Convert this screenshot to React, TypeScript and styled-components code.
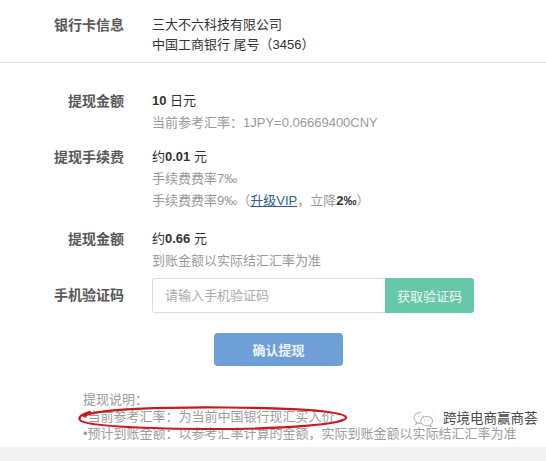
import React from "react";
import styled, { createGlobalStyle } from "styled-components";

const Global = createGlobalStyle`
  html, body { margin: 0; padding: 0; background: #ffffff; }
  body {
    font-family: "Liberation Sans", "Noto Sans CJK SC", sans-serif;
    font-size: 13px;
    color: #333;
  }
  * { box-sizing: border-box; }
`;

const Page = styled.div`
  position: relative;
  width: 546px;
  height: 461px;
  overflow: hidden;
  background: #fff;
`;

const BankSection = styled.section`
  padding: 15px 0 7px;
  border-bottom: 1px solid #e3e3e3;
`;

const Form = styled.section`
  padding-top: 27px;
`;

const Row = styled.div<{ $top?: number; $lh?: number; $center?: boolean }>`
  display: grid;
  grid-template-columns: 124px 1fr;
  column-gap: 28px;
  margin-top: ${(p) => p.$top ?? 0}px;
  line-height: ${(p) => p.$lh ?? 22}px;
  align-items: ${(p) => (p.$center ? "center" : "start")};
`;

const Label = styled.div`
  text-align: right;
  font-size: 14px;
  font-weight: 700;
  color: #585858;
  white-space: nowrap;
`;

const Values = styled.div`
  display: flex;
  flex-direction: column;
`;

const Main = styled.div`
  font-size: 13px;
  color: #333;
  white-space: nowrap;
`;

const Sub = styled.div`
  font-size: 13px;
  color: #999;
  white-space: nowrap;
`;

const Num = styled.b`
  font-weight: 700;
  color: #333;
`;

const VipLink = styled.a`
  color: #2d5c9f;
  text-decoration: underline;
`;

const CodeGroup = styled.div`
  display: flex;
  width: 322px;
  height: 35px;
`;

const CodeInput = styled.input`
  flex: 1;
  min-width: 0;
  height: 35px;
  border: 1px solid #dcdcdc;
  border-right: none;
  border-radius: 3px 0 0 3px;
  padding: 0 12px;
  font-family: inherit;
  font-size: 13px;
  color: #333;
  outline: none;
  &::placeholder { color: #aaa; }
`;

const CodeButton = styled.button`
  width: 89px;
  height: 35px;
  border: none;
  border-radius: 0 3px 3px 0;
  background: #66c8a6;
  color: #eefaf5;
  font-family: inherit;
  font-size: 13px;
  padding: 0;
`;

const ActionBar = styled.div`
  padding-left: 214px;
  margin-top: 20px;
`;

const ConfirmButton = styled.button`
  width: 129px;
  height: 33px;
  border: none;
  border-radius: 4px;
  background: #6ea0d7;
  color: #eef4fb;
  font-family: inherit;
  font-size: 13px;
  font-weight: 700;
  padding: 0;
`;

const Notes = styled.div`
  margin-top: 25px;
  padding-left: 83px;
  font-size: 13px;
  line-height: 17px;
  color: #9c9c9c;
  height: 56px;
`;

const NoteLine = styled.div`
  white-space: nowrap;
`;

const Band = styled.div`
  height: 20px;
  background: #f2f2f2;
`;

const Ellipse = styled.svg`
  position: absolute;
  left: 76px;
  top: 404px;
  width: 274px;
  height: 28px;
  pointer-events: none;
`;

const Watermark = styled.div`
  position: absolute;
  left: 413px;
  top: 410px;
  display: flex;
  align-items: center;
  gap: 9px;
  font-size: 13.5px;
  line-height: 18px;
  color: #4a4a4a;
  text-shadow: 0 0 2px #fff, 0 0 2px #fff;
  white-space: nowrap;
`;

const WeChatIcon = () => (
  <svg width="21" height="16" viewBox="0 0 21 16" fill="none" stroke="#b5b5b5" strokeWidth="1.1">
    <path d="M8 1.2c-3.9 0-7 2.5-7 5.6 0 1.8 1 3.3 2.6 4.3l-.7 2.1 2.5-1.3c.8.2 1.7.4 2.6.4" />
    <path d="M13.6 5.3c3.3 0 6 2.2 6 4.8 0 1.5-.8 2.8-2.1 3.7l.5 1.8-2.1-1.1c-.7.2-1.5.3-2.3.3-3.3 0-6-2.1-6-4.7s2.7-4.8 6-4.8z" />
    <circle cx="5.6" cy="5.2" r=".7" fill="#b5b5b5" stroke="none" />
    <circle cx="10.2" cy="5.2" r=".7" fill="#b5b5b5" stroke="none" />
    <circle cx="11.7" cy="9.2" r=".6" fill="#b5b5b5" stroke="none" />
    <circle cx="15.6" cy="9.2" r=".6" fill="#b5b5b5" stroke="none" />
  </svg>
);

export default function App() {
  return (
    <>
      <Global />
      <Page>
        <BankSection>
          <Row $lh={20}>
            <Label>银行卡信息</Label>
            <Values>
              <Main>三大不六科技有限公司</Main>
              <Main>中国工商银行 尾号（3456）</Main>
            </Values>
          </Row>
        </BankSection>

        <Form>
          <Row>
            <Label>提现金额</Label>
            <Values>
              <Main>
                <Num>10</Num> 日元
              </Main>
              <Sub>当前参考汇率：1JPY=0.06669400CNY</Sub>
            </Values>
          </Row>

          <Row $top={12}>
            <Label>提现手续费</Label>
            <Values>
              <Main>
                约<Num>0.01</Num> 元
              </Main>
              <Sub>手续费费率7‰</Sub>
              <Sub>
                手续费费率9‰（<VipLink>升级VIP</VipLink>，立降<Num>2‰</Num>）
              </Sub>
            </Values>
          </Row>

          <Row $top={16}>
            <Label>提现金额</Label>
            <Values>
              <Main>
                约<Num>0.66</Num> 元
              </Main>
              <Sub>到账金额以实际结汇汇率为准</Sub>
            </Values>
          </Row>

          <Row $top={6} $lh={35} $center>
            <Label>手机验证码</Label>
            <CodeGroup>
              <CodeInput placeholder="请输入手机验证码" />
              <CodeButton>获取验证码</CodeButton>
            </CodeGroup>
          </Row>

          <ActionBar>
            <ConfirmButton>确认提现</ConfirmButton>
          </ActionBar>

          <Notes>
            <NoteLine>提现说明：</NoteLine>
            <NoteLine>•当前参考汇率：为当前中国银行现汇买入价</NoteLine>
            <NoteLine>•预计到账金额：以参考汇率计算的金额，实际到账金额以实际结汇汇率为准</NoteLine>
          </Notes>
        </Form>

        <Band />

        <Ellipse viewBox="0 0 274 28">
          <path
            d="M8 12C20 5 90 3 150 3.5C215 4 268 7 270 13.5C272 20 210 25 140 25C70 25 8 22 4 16C2 13 6 10 14 8"
            fill="none"
            stroke="#c81820"
            strokeWidth="2.2"
            strokeLinecap="round"
          />
        </Ellipse>

        <Watermark>
          <WeChatIcon />
          <span>跨境电商赢商荟</span>
        </Watermark>
      </Page>
    </>
  );
}
